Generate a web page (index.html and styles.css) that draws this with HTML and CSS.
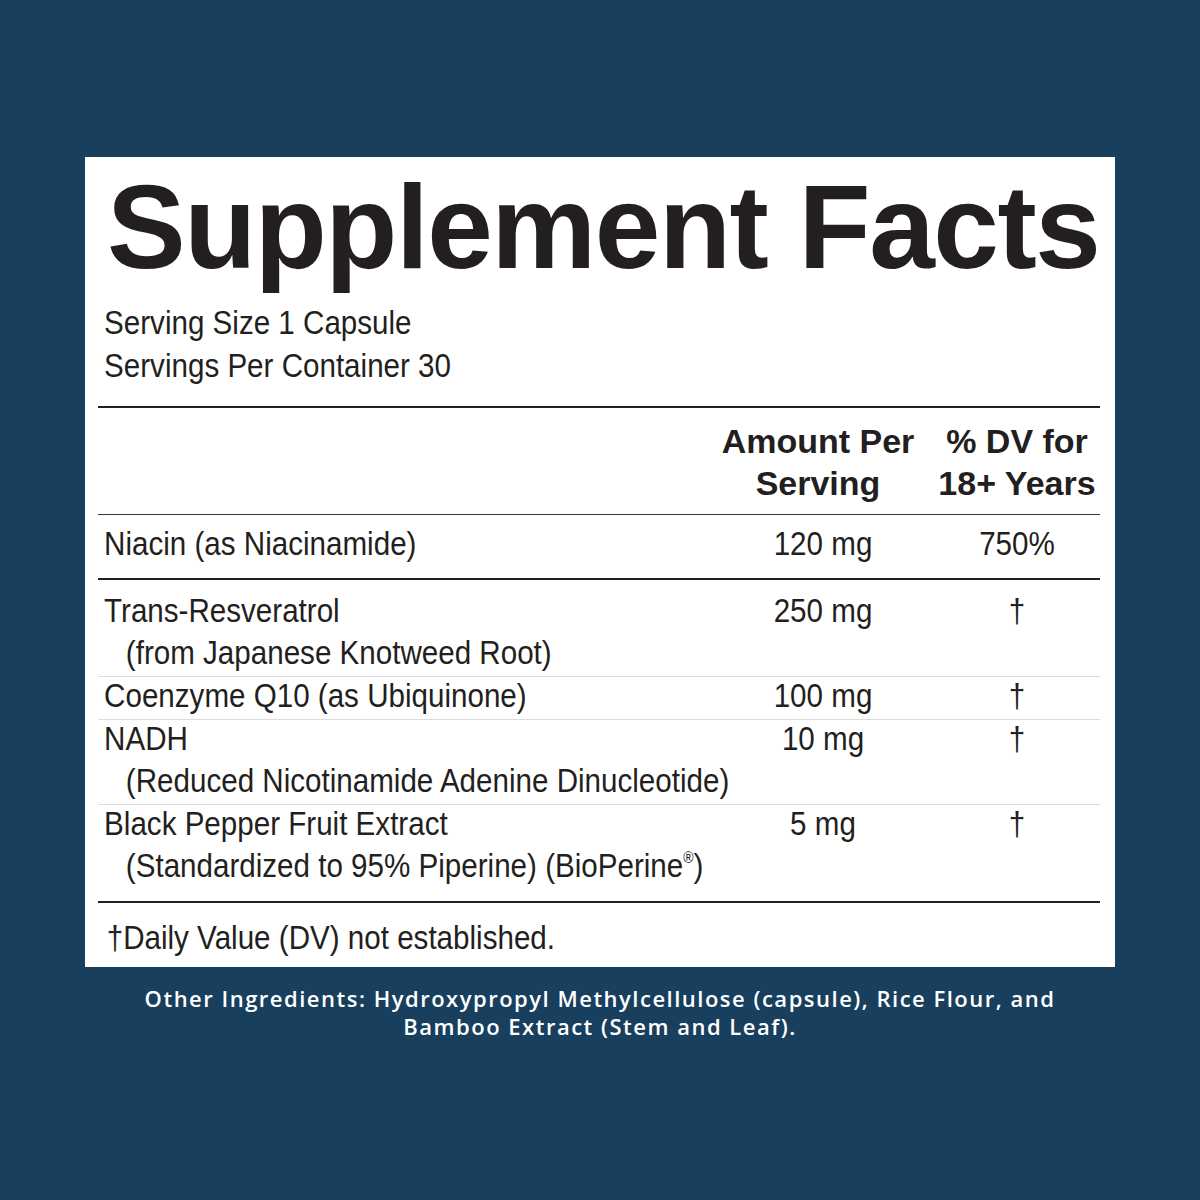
FILE: index.html
```html
<!DOCTYPE html>
<html lang="en">
<head>
<meta charset="utf-8">
<title>Supplement Facts</title>
<link rel="stylesheet" href="styles.css">
</head>
<body>
<div class="page">
  <div class="panel">
    <h1 class="title">Supplement Facts</h1>
    <div class="serving">
      <div>Serving Size 1 Capsule</div>
      <div>Servings Per Container 30</div>
    </div>
    <div class="table">
      <div class="row head">
        <div class="hname"></div>
        <div class="hcol hamt">Amount Per<br>Serving</div>
        <div class="hcol">% DV for<br>18+ Years</div>
      </div>
      <div class="row niacin">
        <div class="name">Niacin (as Niacinamide)</div>
        <div class="amt">120 mg</div>
        <div class="dv">750%</div>
      </div>
      <div class="row trans">
        <div class="name">Trans-Resveratrol<div class="sub">(from Japanese Knotweed Root)</div></div>
        <div class="amt">250 mg</div>
        <div class="dv">†</div>
      </div>
      <div class="row plain">
        <div class="name">Coenzyme Q10 (as Ubiquinone)</div>
        <div class="amt">100 mg</div>
        <div class="dv">†</div>
      </div>
      <div class="row plain">
        <div class="name">NADH<div class="sub">(Reduced Nicotinamide Adenine Dinucleotide)</div></div>
        <div class="amt">10 mg</div>
        <div class="dv">†</div>
      </div>
      <div class="row plain last">
        <div class="name">Black Pepper Fruit Extract<div class="sub">(Standardized to 95% Piperine) (BioPerine<sup class="reg">®</sup>)</div></div>
        <div class="amt">5 mg</div>
        <div class="dv">†</div>
      </div>
    </div>
    <div class="foot">†Daily Value (DV) not established.</div>
  </div>
  <p class="other">Other Ingredients: Hydroxypropyl Methylcellulose (capsule), Rice Flour, and<br>Bamboo Extract (Stem and Leaf).</p>
</div>
</body>
</html>
```
FILE: styles.css
```css
html, body {
  margin: 0;
  padding: 0;
}
body {
  background: #183f5e;
  width: 1200px;
  height: 1200px;
  overflow: hidden;
}
.page {
  padding-top: 157px;
}
.panel {
  width: 1030px;
  box-sizing: border-box;
  margin: 0 auto;
  background: #ffffff;
  padding: 11px 15px 9px 13px;
  color: #231f20;
  font-family: "Liberation Sans", Arial, sans-serif;
  font-size: 34px;
}
.title {
  margin: 0;
  padding-left: 9px;
  font-weight: 700;
  font-size: 118px;
  line-height: 118px;
  letter-spacing: -1.5px;
  white-space: nowrap;
}
/* condensed text: Helvetica Condensed look */
.serving, .name, .amt, .dv, .foot {
  transform: scaleX(0.87);
  white-space: nowrap;
}
.serving, .name, .foot {
  transform-origin: left center;
}
.amt, .dv {
  transform-origin: center center;
  text-align: center;
}
.serving {
  margin-top: 15px;
  margin-bottom: 19px;
  padding-left: 7px;
  line-height: 43px;
}
.table {
  border-top: 2px solid #231f20;
}
.row {
  display: grid;
  grid-template-columns: 614px 166px 166px;
  column-gap: 28px;
  line-height: 42px;
}
.name {
  padding-left: 7px;
}
.sub {
  padding-left: 25px;
}
.head {
  padding: 12px 0 10px;
  border-bottom: 1px solid #3a3a3a;
  font-weight: 700;
}
.hcol {
  justify-self: center;
  text-align: center;
  white-space: nowrap;
}
.hamt {
  margin-right: 10px;
}
.niacin {
  padding: 7px 0 14px;
  border-bottom: 2px solid #231f20;
}
.trans {
  padding: 9px 0 3px;
  border-bottom: 1px solid #dcdcdc;
}
.plain {
  padding-bottom: 3px;
  border-bottom: 1px solid #dcdcdc;
}
.plain > div {
  margin-top: -3px;
}
.plain.last {
  padding-bottom: 15px;
  border-bottom: 2px solid #231f20;
}
.reg {
  font-size: 16px;
  line-height: 0;
  vertical-align: 14px;
}
.foot {
  padding: 13px 0 0 10px;
  line-height: 42px;
}
.other {
  margin: 17px 0 0;
  text-align: center;
  color: #ffffff;
  font-family: "Open Sans", "Liberation Sans", sans-serif;
  font-weight: 600;
  font-size: 22px;
  letter-spacing: 1.5px;
  line-height: 28px;
}
```
